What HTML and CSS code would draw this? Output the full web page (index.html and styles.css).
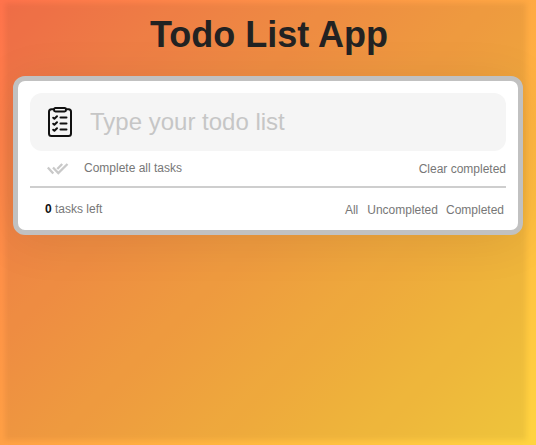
FILE: index.html
```html
<!DOCTYPE html>
<html lang="en">
<head>
<meta charset="utf-8">
<title>Todo List App</title>
<link rel="stylesheet" href="styles.css">
</head>
<body>
<main class="app">
  <h1 class="title">Todo List App</h1>
  <section class="card">
    <label class="entry">
      <svg class="clipboard" viewBox="0 0 24 30" fill="none" stroke="#111" stroke-width="2" stroke-linecap="round" stroke-linejoin="round">
        <path d="M6 2.2H3.5Q1 2.2 1 4.7V26.5Q1 29 3.5 29H20.5Q23 29 23 26.5V4.7Q23 2.2 20.5 2.2H18"/>
        <rect x="6" y="1" width="12" height="3.4" rx="1.4"/>
        <path d="M5.2 10.7 6.4 11.8 9 9.2M5.2 16.7 6.4 17.8 9 15.2M5.2 22.7 6.4 23.8 9 21.2M12.5 10.5H18.5M12.5 16.5H18.5M12.5 22.5H18.5"/>
      </svg>
      <input class="entry-input" type="text" placeholder="Type your todo list">
    </label>
    <div class="row actions">
      <div class="complete-all">
        <svg class="checks" viewBox="0 0 22 13" fill="none" stroke="#c9c9c9" stroke-width="2.3">
          <path d="M.8 4.5 6.3 10.5M6 4.5 11.3 10 20.5 1M10.3 6 15.2 1"/>
        </svg>
        <span>Complete all tasks</span>
      </div>
      <span class="clear">Clear completed</span>
    </div>
    <div class="row footer">
      <span class="count"><b class="number">0</b> tasks left</span>
      <nav class="filters"><span class="filter-all">All</span><span>Uncompleted</span><span>Completed</span></nav>
    </div>
  </section>
</main>
</body>
</html>
```
FILE: styles.css
```css
* { box-sizing: border-box; }
html { height: 100%; }
body {
  margin: 0;
  height: 445px;
  padding: 4px 10px 5px 5px;
  overflow: hidden;
  font-family: "Liberation Sans", Arial, sans-serif;
  font-size: 12px;
  color: #777;
  background: linear-gradient(135deg, #ff734c 0%, #ff8d49 24%, #ffa544 50%, #ffbd40 75%, #ffd440 100%);
}
.app {
  position: relative;
  height: 436px;
  padding: 8px 8px 0;
}
/* Soft-edged tint behind the whole app */
.app::before {
  content: "";
  position: absolute;
  inset: -1px 0 0;
  z-index: -1;
  background: rgba(0, 0, 0, .065);
  filter: blur(2.5px);
}
.title {
  margin: 0 -1px 19px 0;
  padding: 1px 0 0 6px;
  font-size: 36px;
  line-height: 44px;
  text-align: center;
  color: #222;
}
.card {
  width: 510px;
  height: 159px;
  padding: 12px;
  background: #fff;
  border: 5px solid #c1c1c1;
  border-radius: 12px;
  box-shadow: 0 6px 50px rgba(0, 0, 0, .08);
}
.entry {
  display: flex;
  align-items: center;
  height: 58px;
  padding-left: 18px;
  gap: 18px;
  background: #f5f5f5;
  border-radius: 12px;
}
.clipboard { width: 24px; height: 30px; }
.entry-input {
  flex: 1;
  padding: 0;
  border: 0;
  outline: 0;
  background: none;
  font: 24px "Liberation Sans", Arial, sans-serif;
}
.entry-input::placeholder { color: #c6c6c6; opacity: 1; }
.row { display: flex; justify-content: space-between; }
.actions {
  height: 37px;
  padding: 10px 0 0 17px;
  line-height: 14px;
  border-bottom: 2px solid #cecece;
}
.complete-all { display: flex; gap: 15px; }
.checks { width: 22px; height: 13px; margin-top: 2px; }
.clear { padding-top: 1px; }
.footer { padding: 14px 2px 0 15px; line-height: 14px; }
.number { color: #111; }
.filters { display: flex; gap: 8px; padding-top: 1px; }
.filter-all { margin-right: 1px; }
```
